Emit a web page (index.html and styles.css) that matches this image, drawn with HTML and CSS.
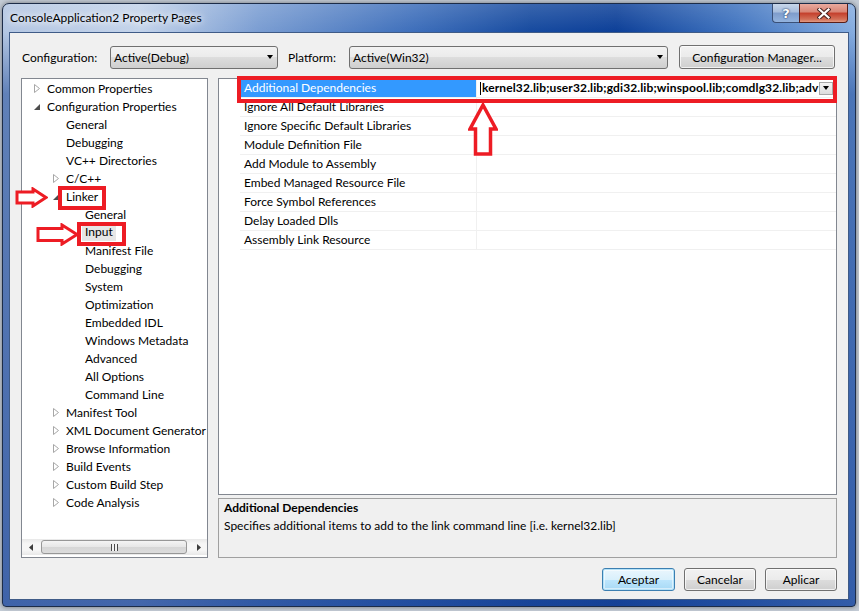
FILE: index.html
```html
<!DOCTYPE html>
<html lang="en">
<head>
  <meta charset="UTF-8">
  <title>ConsoleApplication2 Property Pages</title>
  <link rel="stylesheet" href="styles.css">
</head>
<body>
  <div class="window">
    <div class="titlebar">
      <span class="title">ConsoleApplication2 Property Pages</span>
      <div class="caption">
        <span class="cap help">?</span>
        <span class="cap close">
          <svg width="14" height="11" viewBox="0 0 14 11">
            <path d="M2.5 1.5 L11.5 9.5 M11.5 1.5 L2.5 9.5" stroke="#4a2420" stroke-width="4.2" stroke-linecap="square"/>
            <path d="M2.5 1.5 L11.5 9.5 M11.5 1.5 L2.5 9.5" stroke="#fff" stroke-width="2.2" stroke-linecap="square"/>
          </svg>
        </span>
      </div>
    </div>

    <div class="client">
      <div class="config-row">
        <span class="cfg-label">Configuration:</span>
        <div class="combo combo-config">Active(Debug)<span class="arrow"></span></div>
        <span class="cfg-label plat">Platform:</span>
        <div class="combo combo-platform">Active(Win32)<span class="arrow"></span></div>
        <button class="btn cfg-mgr">Configuration Manager...</button>
      </div>

      <div class="main">
        <div class="tree">
          <ul class="tree-list">
            <li class="l0"><span class="exp"><svg width="6" height="9"><path d="M0.5 0.5 L5.5 4.5 L0.5 8.5 Z" fill="#fff" stroke="#a7a7a7"/></svg></span>Common Properties</li>
            <li class="l0"><span class="exp"><svg width="6" height="9"><path d="M6 2 L6 8 L0 8 Z" fill="#4d4d4d"/></svg></span>Configuration Properties</li>
            <li class="l1"><span class="exp"></span>General</li>
            <li class="l1"><span class="exp"></span>Debugging</li>
            <li class="l1"><span class="exp"></span>VC++ Directories</li>
            <li class="l1"><span class="exp"><svg width="6" height="9"><path d="M0.5 0.5 L5.5 4.5 L0.5 8.5 Z" fill="#fff" stroke="#a7a7a7"/></svg></span>C/C++</li>
            <li class="l1"><span class="exp"><svg width="6" height="9"><path d="M6 2 L6 8 L0 8 Z" fill="#4d4d4d"/></svg></span>Linker</li>
            <li class="l2"><span class="exp"></span>General</li>
            <li class="l2"><span class="exp"></span><span class="sel">Input</span></li>
            <li class="l2"><span class="exp"></span>Manifest File</li>
            <li class="l2"><span class="exp"></span>Debugging</li>
            <li class="l2"><span class="exp"></span>System</li>
            <li class="l2"><span class="exp"></span>Optimization</li>
            <li class="l2"><span class="exp"></span>Embedded IDL</li>
            <li class="l2"><span class="exp"></span>Windows Metadata</li>
            <li class="l2"><span class="exp"></span>Advanced</li>
            <li class="l2"><span class="exp"></span>All Options</li>
            <li class="l2"><span class="exp"></span>Command Line</li>
            <li class="l1"><span class="exp"><svg width="6" height="9"><path d="M0.5 0.5 L5.5 4.5 L0.5 8.5 Z" fill="#fff" stroke="#a7a7a7"/></svg></span>Manifest Tool</li>
            <li class="l1"><span class="exp"><svg width="6" height="9"><path d="M0.5 0.5 L5.5 4.5 L0.5 8.5 Z" fill="#fff" stroke="#a7a7a7"/></svg></span>XML Document Generator</li>
            <li class="l1"><span class="exp"><svg width="6" height="9"><path d="M0.5 0.5 L5.5 4.5 L0.5 8.5 Z" fill="#fff" stroke="#a7a7a7"/></svg></span>Browse Information</li>
            <li class="l1"><span class="exp"><svg width="6" height="9"><path d="M0.5 0.5 L5.5 4.5 L0.5 8.5 Z" fill="#fff" stroke="#a7a7a7"/></svg></span>Build Events</li>
            <li class="l1"><span class="exp"><svg width="6" height="9"><path d="M0.5 0.5 L5.5 4.5 L0.5 8.5 Z" fill="#fff" stroke="#a7a7a7"/></svg></span>Custom Build Step</li>
            <li class="l1"><span class="exp"><svg width="6" height="9"><path d="M0.5 0.5 L5.5 4.5 L0.5 8.5 Z" fill="#fff" stroke="#a7a7a7"/></svg></span>Code Analysis</li>
          </ul>
          <div class="hscroll">
            <span class="sb-btn"><svg width="4" height="7"><path d="M4 0 L0 3.5 L4 7 Z" fill="#3c3c3c"/></svg></span>
            <div class="sb-track">
              <div class="sb-thumb"><span class="grip"></span></div>
            </div>
            <span class="sb-btn"><svg width="4" height="7"><path d="M0 0 L4 3.5 L0 7 Z" fill="#3c3c3c"/></svg></span>
          </div>
        </div>

        <div class="right">
          <div class="grid">
            <div class="row selected">
              <span class="gut"></span>
              <span class="name">Additional Dependencies</span>
              <span class="val">
                <span class="caret"></span>
                <span class="val-text">kernel32.lib;user32.lib;gdi32.lib;winspool.lib;comdlg32.lib;adv</span>
                <span class="drop"><span class="arrow"></span></span>
              </span>
            </div>
            <div class="row"><span class="gut"></span><span class="name">Ignore All Default Libraries</span><span class="val"></span></div>
            <div class="row"><span class="gut"></span><span class="name">Ignore Specific Default Libraries</span><span class="val"></span></div>
            <div class="row"><span class="gut"></span><span class="name">Module Definition File</span><span class="val"></span></div>
            <div class="row"><span class="gut"></span><span class="name">Add Module to Assembly</span><span class="val"></span></div>
            <div class="row"><span class="gut"></span><span class="name">Embed Managed Resource File</span><span class="val"></span></div>
            <div class="row"><span class="gut"></span><span class="name">Force Symbol References</span><span class="val"></span></div>
            <div class="row"><span class="gut"></span><span class="name">Delay Loaded Dlls</span><span class="val"></span></div>
            <div class="row"><span class="gut"></span><span class="name">Assembly Link Resource</span><span class="val"></span></div>
          </div>
          <div class="desc">
            <div class="desc-title">Additional Dependencies</div>
            <div>Specifies additional items to add to the link command line [i.e. kernel32.lib]</div>
          </div>
        </div>
      </div>

      <div class="buttons">
        <button class="btn dlg default">Aceptar</button>
        <button class="btn dlg">Cancelar</button>
        <button class="btn dlg">Aplicar</button>
      </div>

      <!-- red marks drawn over the dialog -->
      <div class="mark box-row"></div>
      <div class="mark box-linker"></div>
      <div class="mark box-input"></div>
      <svg class="mark arrow-up" width="30" height="53" viewBox="0 0 30 53">
        <path d="M15 2 L28 26 L22.5 26 L22.5 51 L7.5 51 L7.5 26 L2 26 Z" fill="#fff" stroke="#ed1c24" stroke-width="3.5" stroke-linejoin="miter"/>
      </svg>
      <svg class="mark arrow-linker" width="33" height="21" viewBox="0 0 33 21">
        <path d="M2 5 L18 5 L18 2 L31 10.5 L18 19 L18 16 L2 16 Z" fill="#fff" stroke="#ed1c24" stroke-width="3"/>
      </svg>
      <svg class="mark arrow-input" width="43" height="23" viewBox="0 0 43 23">
        <path d="M2 5.5 L26 5.5 L26 2 L41 11.5 L26 21 L26 17.5 L2 17.5 Z" fill="#fff" stroke="#ed1c24" stroke-width="3"/>
      </svg>
    </div>
  </div>
</body>
</html>
```

FILE: styles.css
```css
* {
  box-sizing: border-box;
}

body {
  margin: 0;
  width: 859px;
  height: 611px;
  overflow: hidden;
  background: #c4ccd6;
  font-family: Lato, "Noto Sans", sans-serif;
  font-size: 12px;
  color: #000;
}

.window {
  margin: 3px 0 0 2px;
  width: 854px;
  height: 604px;
  border: 1px solid #1c2c48;
  border-radius: 7px 7px 4px 4px;
  padding: 0 6px 6px;
  display: flex;
  flex-direction: column;
  background:
    linear-gradient(to bottom, rgba(255,255,255,0.15), rgba(255,255,255,0) 28px, rgba(28,72,150,0.55) 90px, rgba(24,66,150,0.75)),
    linear-gradient(to right, #b3c6e2 0%, #c3d3ea 16%, #7a9dd2 30%, #3e6fbb 48%, #164a9f 62%, #0c3f98 72%, #3f73bf 86%, #86ade0 100%);
  box-shadow: 0 0 5px rgba(0, 0, 0, 0.45);
}

/* title bar */
.titlebar {
  height: 28px;
  display: flex;
  align-items: flex-start;
}

.title {
  padding-left: 1px;
  line-height: 27px;
  font-size: 12px;
  text-shadow: 0 0 6px #fff, 0 0 10px #fff;
}

.caption {
  margin-left: auto;
  margin-right: 1px;
  display: flex;
}

.cap {
  height: 19px;
  display: flex;
  align-items: center;
  justify-content: center;
  border: 1px solid #3a5077;
  border-top: none;
}

.help {
  width: 27px;
  border-radius: 0 0 0 4px;
  border-right: none;
  background: linear-gradient(#c7d6ea, #a6bcdc 45%, #7e9ccb 50%, #93b3de);
  color: #fff;
  font-weight: bold;
  font-size: 13px;
  font-family: "DejaVu Sans", sans-serif;
  text-shadow: 0 0 2px #233a66, 0 0 1px #233a66;
}

.close {
  width: 49px;
  border-color: #5a1e18;
  border-radius: 0 0 4px 0;
  background: linear-gradient(#e9aa9e, #d88474 45%, #c43e2b 50%, #d27058 85%, #e29b84);
}

/* client area */
.client {
  flex: 1;
  position: relative;
  display: flex;
  flex-direction: column;
  background: #f0f0f0;
  border: 1px solid #3f5b87;
}

.config-row {
  display: flex;
  align-items: center;
  height: 24px;
  margin-top: 12px;
  padding-left: 12px;
}

.cfg-label {
  width: 88px;
}

.cfg-label.plat {
  width: 61px;
  margin-left: 10px;
}

.combo {
  height: 23px;
  display: flex;
  align-items: center;
  padding-left: 3px;
  border: 1px solid #707070;
  border-radius: 3px;
  background: linear-gradient(#f2f2f2, #ebebeb 50%, #dddddd 50%, #cfcfcf);
}

.combo-config {
  width: 168px;
}

.combo-platform {
  width: 319px;
}

.arrow {
  margin-left: auto;
  margin-right: 4px;
  width: 0;
  height: 0;
  border-top: 4px solid #000;
  border-left: 3.5px solid transparent;
  border-right: 3.5px solid transparent;
}

.btn {
  font-family: inherit;
  font-size: 12px;
  color: #000;
  border: 1px solid #707070;
  border-radius: 3px;
  background: linear-gradient(#f2f2f2, #ebebeb 50%, #dddddd 50%, #cfcfcf);
  box-shadow: inset 0 0 0 1px rgba(255, 255, 255, 0.7);
  padding: 0;
}

.cfg-mgr {
  margin-left: 11px;
  width: 156px;
  height: 24px;
}

/* main panels */
.main {
  display: flex;
  gap: 10px;
  margin-top: 9px;
  padding-left: 11px;
  height: 480px;
}

.tree {
  width: 187px;
  border: 1px solid #828790;
  background: #fff;
  display: flex;
  flex-direction: column;
}

.tree-list {
  list-style: none;
  margin: 0;
  padding: 0;
  flex: 1;
  overflow: hidden;
}

.tree-list li {
  height: 18px;
  display: flex;
  align-items: center;
  white-space: nowrap;
}

.l0 { padding-left: 6px; }
.l1 { padding-left: 25px; }
.l2 { padding-left: 44px; }

.exp {
  width: 19px;
  flex: none;
  display: flex;
  align-items: center;
  padding-left: 6px;
}

.sel {
  margin-left: -3px;
  padding: 1px 3px 2px;
  background: #e6e6e6;
}

.hscroll {
  height: 16px;
  margin: 0 0 2px;
  display: flex;
  align-items: center;
  background: linear-gradient(to bottom, #e8e8e8, #f6f6f6 30%, #f6f6f6 70%, #e8e8e8);
}

.sb-btn {
  width: 17px;
  height: 16px;
  display: flex;
  align-items: center;
  justify-content: center;
}

.sb-track {
  flex: 1;
  height: 16px;
  padding: 1px 3px 1px 2px;
}

.sb-thumb {
  height: 14px;
  border: 1px solid #979797;
  border-radius: 3px;
  background: linear-gradient(#f4f4f4, #e6e6e6 50%, #d6d6d6 50%, #dcdcdc);
  display: flex;
  align-items: center;
  justify-content: center;
}

.grip {
  width: 7px;
  height: 7px;
  background: repeating-linear-gradient(to right, #4a4a4a 0 1px, #f2f2f2 1px 3px);
}

.right {
  width: 619px;
  display: flex;
  flex-direction: column;
  gap: 3px;
}

.grid {
  height: 417px;
  border: 1px solid #828790;
  background: #fff;
}

.row {
  display: grid;
  grid-template-columns: 21px 237px 1fr;
  height: 19px;
}

.name,
.val {
  border-bottom: 1px solid #f0f0f0;
  line-height: 18px;
  white-space: nowrap;
  overflow: hidden;
}

.name {
  padding-left: 4px;
  border-right: 1px solid #f0f0f0;
}

.row.selected .name {
  background: #3399ff;
  color: #fff;
}

.row.selected .val {
  display: flex;
  align-items: center;
  padding-left: 3px;
  font-weight: bold;
}

.caret {
  flex: none;
  width: 1px;
  height: 13px;
  background: #000;
}

.val-text {
  flex: 1;
  min-width: 0;
  padding-left: 1px;
  letter-spacing: 0.12px;
}

.drop {
  flex: none;
  width: 14px;
  height: 13px;
  margin: 0 3px 0 2px;
  display: flex;
  align-items: center;
  border: 1px solid #a8a8a8;
  background: linear-gradient(#f4f4f4, #dcdcdc);
}

.drop .arrow {
  margin: 0 auto;
}

.desc {
  flex: 1;
  border: 1px solid #a0a0a0;
  background: #f0f0f0;
  padding: 0 5px;
  line-height: 18px;
}

.desc-title {
  font-weight: bold;
}

.buttons {
  display: flex;
  justify-content: flex-end;
  gap: 9px;
  margin-top: 10px;
  padding-right: 11px;
}

.dlg {
  width: 72px;
  height: 23px;
}

.dlg.default {
  width: 73px;
  border-color: #3c7fb1;
  box-shadow: inset 0 0 0 1px #b5e2f8, inset 0 0 0 2px rgba(255, 255, 255, 0.5);
  background: linear-gradient(#eaf6fd, #d9f0fc 50%, #bee6fd 50%, #a7d9f5);
}

/* red marks */
.mark {
  position: absolute;
}

.box-row,
.box-linker,
.box-input {
  border: 4px solid #ed1c24;
}

.box-row {
  left: 227px;
  top: 43px;
  width: 600px;
  height: 27px;
}

.box-linker {
  left: 48px;
  top: 153px;
  width: 48px;
  height: 24px;
}

.box-input {
  left: 67px;
  top: 189px;
  width: 49px;
  height: 24px;
}

.arrow-up {
  left: 458px;
  top: 70px;
}

.arrow-linker {
  left: 5px;
  top: 154px;
}

.arrow-input {
  left: 26px;
  top: 190px;
}
```
